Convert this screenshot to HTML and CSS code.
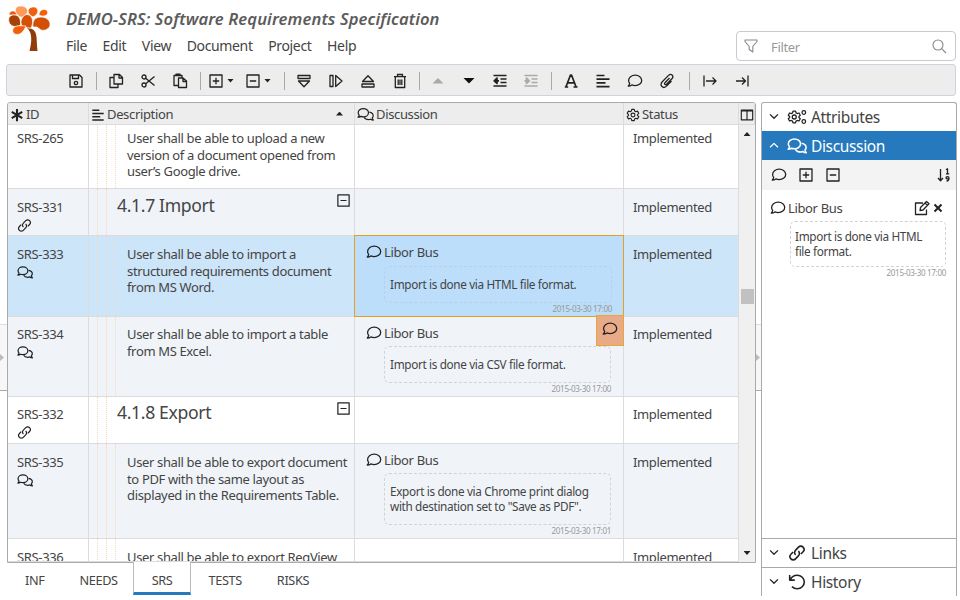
FILE: index.html
```html
<!DOCTYPE html>
<html lang="en">

<head>
    <meta charset="UTF-8">
    <meta name="viewport" content="width=device-width, initial-scale=1.0">
    <title>DEMO-SRS: Software Requirements Specification</title>
    <link rel="stylesheet" href="styles.css">
</head>

<body>
    <svg class="sprite">
        <symbol id="comment" viewBox="0 0 16 16"><path d="M8.2 2.2c3.700 0 6.500 2.300 6.500 5.200s-2.800 5.200-6.500 5.200c-1.200 0-2.300-.2-3.300-.7-1 .8-2.200 1.200-3.700 1.200.8-.8 1.300-1.700 1.500-2.700-.7-.8-1.100-1.900-1.100-3 0-2.900 2.900-5.200 6.600-5.200z"/></symbol>
        <symbol id="comments" viewBox="0 0 18 16"><path d="M6.700 1.700c3 0 5.500 1.900 5.500 4.400s-2.500 4.400-5.500 4.400c-.9 0-1.800-.2-2.500-.5-.8.500-1.900.9-3.200.9.700-.6 1.200-1.400 1.300-2.200-.7-.7-1.100-1.600-1.100-2.600 0-2.500 2.500-4.400 5.500-4.400zM13.200 5.500c2.200.4 4 1.900 4 3.900 0 .9-.4 1.700-1 2.300.2.900.6 1.600 1.200 2.300-1.200 0-2.200-.4-3-1-.7.300-1.400.400-2.200.400-2.100 0-3.900-.9-4.600-2.400"/></symbol>
        <symbol id="link" viewBox="0 0 16 16"><path d="M6.800 9.700c-1.300-1.200-1.300-3 0-4.300l2.500-2.600c1.200-1.200 3-1.200 4.100 0s1.200 2.900 0 4.100l-1.900 2M9.200 6.300c1.300 1.200 1.300 3 0 4.300l-2.500 2.600c-1.200 1.200-3 1.200-4.100 0s-1.200-2.900 0-4.100l1.900-2"/></symbol>
        <symbol id="plus" viewBox="0 0 16 16"><path d="M2 2h12v12H2zM8 4.800v6.400M4.800 8h6.400"/></symbol>
        <symbol id="minus" viewBox="0 0 16 16"><path d="M2 2h12v12H2zM4.800 8h6.400"/></symbol>
        <symbol id="lines" viewBox="0 0 16 16"><path d="M1.500 2.500h8M1.500 6.200h13M1.500 9.900h9M1.500 13.600h13"/></symbol>
        <symbol id="gear" viewBox="0 0 16 16"><path d="M6.600 1.500h2.800l.5 2 1.300.7 2-.6 1.400 2.500-1.500 1.400v1l1.500 1.400-1.400 2.500-2-.6-1.300.7-.5 2H6.600l-.5-2-1.300-.7-2 .6-1.400-2.500 1.500-1.400v-1L1.400 6.100l1.400-2.500 2 .6 1.300-.7z"/><circle cx="8" cy="8" r="2.200"/></symbol>
        <symbol id="down" viewBox="0 0 16 16"><path d="M3.500 5l4.500 4.500L12.500 5"/></symbol>
        <symbol id="up" viewBox="0 0 16 16"><path d="M3.500 9.500L8 5l4.500 4.500"/></symbol>
    </svg>

    <header class="header">
        <svg class="logo" viewBox="0 0 60 60">
            <path fill="#8f3d0b" d="M27 28c6 0 9 3 9.500 9 .4 6 .5 9 1 14H29.500c2-8 3.500-18-2.500-23z"/>
            <g stroke="#fff" stroke-width=".7">
                <path fill="#e8590c" d="M9 15c0-4 4-5 7-3l1 3z"/>
                <path fill="#ff9a5c" d="M21 17.500C17 15 14.500 12 15.500 9s4-3 6-3 5 1 6 4-2 5.500-6.500 7.500z"/>
                <path fill="#f0600c" d="M33 17c-4-2-5.500-5-4.500-7.500s6-3.500 8-1.500 2.500 6-3.500 9z"/>
                <path fill="#f65f08" d="M39 15c0-4 3-6 6-5.500s3.500 4 1.500 5.500-5 1.500-7.500 0z"/>
                <path fill="#a64208" d="M20.500 25c-4 2.500-10 2-11.500-3s2-7.500 6-7 6 4 5.500 10z"/>
                <path fill="#d65006" d="M31 28c-5 0-9.500-1-10-5s3-8.500 6-8.500 5 2.500 5.500 5.500-.5 6-1.500 8z"/>
                <path fill="#d24f05" d="M33 27c-1-6 2-10 8-10s9.500 4 9 8-5 6-9 5l-4-3c-2 0-3 0-4 0z"/>
                <path fill="#f4600a" d="M26 26c-2 5-5 8.500-9 8.500s-5.500-4-3.500-6.500 6-2.500 12.500-2z"/>
            </g>
        </svg>
        <div class="heading">
            <h1>DEMO-SRS: Software Requirements Specification</h1>
            <nav class="menu">
                <span>File</span><span>Edit</span><span>View</span><span>Document</span><span>Project</span><span>Help</span>
            </nav>
        </div>
        <div class="filter">
            <svg class="icon" viewBox="0 0 16 16"><path d="M2 2h12v1.500L9.800 8.500V14L6.200 11.500v-3L2 3.500z"/></svg>
            <span>Filter</span>
            <svg class="icon" viewBox="0 0 16 16"><circle cx="7" cy="7" r="5"/><path d="M10.700 10.700L15 15"/></svg>
        </div>
    </header>

    <div class="toolbar">
        <svg class="icon" viewBox="0 0 16 16"><path d="M2 2h9.500L14 4.500V14H2zM4.500 2v3.500h6V2"/><circle cx="8" cy="10" r="1.700"/></svg>
        <i class="sep"></i>
        <svg class="icon" viewBox="0 0 16 16"><path d="M6 1.500h5.500l3 3V11H6zM11 1.500V5h3.500M6 4.500H2v10h8V11"/></svg>
        <svg class="icon" viewBox="0 0 16 16"><circle cx="4" cy="4" r="2"/><circle cx="4" cy="12" r="2"/><path d="M5.700 5.200L14.500 12.500M5.700 10.800L14.500 3.500"/></svg>
        <svg class="icon" viewBox="0 0 16 16"><path d="M6 12.500H2v-10h8V5M4 2.500V1.200h4v1.300M6.500 5H11l3.500 3v6.500h-8zM11 5v3.500h3.500"/></svg>
        <i class="sep s2"></i>
        <svg class="icon" viewBox="0 0 16 16"><use href="#plus"/></svg><b class="caret"></b>
        <svg class="icon" viewBox="0 0 16 16"><use href="#minus"/></svg><b class="caret"></b>
        <i class="sep s3"></i>
        <svg class="icon" viewBox="0 0 16 16"><path d="M2 2.500h12v3H2zM2.500 8h11L8 13.800z"/></svg>
        <svg class="icon" viewBox="0 0 16 16"><path d="M2 2.500h3v11H2zM7.700 2.500L14 8l-6.300 5.500z"/></svg>
        <svg class="icon" viewBox="0 0 16 16"><path d="M2 11h12v3H2zM2.500 8.500h11L8 2.700z"/></svg>
        <svg class="icon" viewBox="0 0 16 16"><path d="M2 3.700h12M5.500 3.500V1.500h5v2M3.300 4v10.500h9.400V4M6.200 6.500v5.500M8 6.500v5.500M9.800 6.500v5.500"/></svg>
        <i class="sep s4"></i>
        <svg class="icon solid muted" viewBox="0 0 16 16"><path d="M2.500 10.500L8 5l5.500 5.500z"/></svg>
        <svg class="icon solid" viewBox="0 0 16 16"><path d="M2.500 5h11L8 10.500z"/></svg>
        <svg class="icon bold outdent" viewBox="0 0 16 16"><path d="M1.500 2.500h13M8.500 6h6M8.500 9.500h6M1.500 13h13M7 7.800H3M5 5.200L2.200 7.800 5 10.400z"/></svg>
        <svg class="icon bold muted" viewBox="0 0 16 16"><path d="M1.500 2.500h13M8.500 6h6M8.500 9.500h6M1.500 13h13M1.500 7.800H5M3.500 5.200l2.800 2.600-2.800 2.600z"/></svg>
        <i class="sep s5"></i>
        <svg class="icon bold" viewBox="0 0 16 16"><path d="M3 13.800L7.500 2h1L13 13.800M1.800 14h3.400M10.500 14h4M4.800 9.800h6.500"/></svg>
        <svg class="icon bold" viewBox="0 0 16 16"><use href="#lines"/></svg>
        <svg class="icon" viewBox="0 0 16 16"><use href="#comment"/></svg>
        <svg class="icon" viewBox="0 0 16 16"><path d="M10.500 5L6 9.700c-1.200 1.300.4 2.700 1.600 1.500l5.300-5.500c2.500-2.800-.9-5.800-3.400-3.300L3.300 8.700c-3.500 3.800 1 7.800 4.500 4.200L12.500 8"/></svg>
        <i class="sep s6"></i>
        <svg class="icon" viewBox="0 0 16 16"><path d="M2 2.500v11M4 8h10M10.500 4.500L14 8l-3.500 3.500"/></svg>
        <svg class="icon" viewBox="0 0 16 16"><path d="M14 2.500v11M2 8h9.500M8 4.500L11.500 8 8 11.500"/></svg>
    </div>

    <main class="main">
        <div class="splitter"></div>

        <section class="left">
            <div class="table">
                <div class="row thead">
                    <div><svg class="icon star" viewBox="0 0 16 16"><path d="M8 1v14M2 4.500l12 7M14 4.500l-12 7"/></svg>ID</div>
                    <div><svg class="icon bold" viewBox="0 0 16 16"><use href="#lines"/></svg>Description<b class="caret asc"></b></div>
                    <div><svg class="icon wide" viewBox="0 0 18 16"><use href="#comments"/></svg>Discussion</div>
                    <div><svg class="icon" viewBox="0 0 16 16"><use href="#gear"/></svg>Status</div>
                    <div class="columns"><svg class="icon" viewBox="0 0 16 16"><path d="M1.500 2.500h13v11h-13zM8 2.500v11M1.500 3.300h13"/></svg></div>
                </div>
                <div class="body">
                    <div class="rows">
                        <div class="row first">
                            <div class="id">SRS-265</div>
                            <div class="desc"><i></i><i></i><i></i><p>User shall be able to upload a new<br>version of a document opened from<br>user’s Google drive.</p></div>
                            <div></div>
                            <div class="status">Implemented</div>
                        </div>
                        <div class="row odd">
                            <div class="id">SRS-331<svg class="icon" viewBox="0 0 16 16"><use href="#link"/></svg></div>
                            <div class="desc"><i></i><i></i><h2>4.1.7 Import</h2><svg class="icon fold" viewBox="0 0 16 16"><use href="#minus"/></svg></div>
                            <div></div>
                            <div class="status">Implemented</div>
                        </div>
                        <div class="row selected">
                            <div class="id">SRS-333<svg class="icon wide" viewBox="0 0 18 16"><use href="#comments"/></svg></div>
                            <div class="desc"><i></i><i></i><i></i><p>User shall be able to import a<br>structured requirements document<br>from MS Word.</p></div>
                            <div class="talk active">
                                <div class="author"><svg class="icon" viewBox="0 0 16 16"><use href="#comment"/></svg>Libor Bus</div>
                                <div class="note">Import is done via HTML file format.</div>
                                <div class="date">2015-03-30 17:00</div>
                                <div class="add"><svg class="icon" viewBox="0 0 16 16"><use href="#comment"/></svg></div>
                            </div>
                            <div class="status">Implemented</div>
                        </div>
                        <div class="row odd tight">
                            <div class="id">SRS-334<svg class="icon wide" viewBox="0 0 18 16"><use href="#comments"/></svg></div>
                            <div class="desc"><i></i><i></i><i></i><p>User shall be able to import a table<br>from MS Excel.</p></div>
                            <div class="talk">
                                <div class="author"><svg class="icon" viewBox="0 0 16 16"><use href="#comment"/></svg>Libor Bus</div>
                                <div class="note">Import is done via CSV file format.</div>
                                <div class="date">2015-03-30 17:00</div>
                            </div>
                            <div class="status">Implemented</div>
                        </div>
                        <div class="row tight">
                            <div class="id">SRS-332<svg class="icon" viewBox="0 0 16 16"><use href="#link"/></svg></div>
                            <div class="desc"><i></i><i></i><h2>4.1.8 Export</h2><svg class="icon fold" viewBox="0 0 16 16"><use href="#minus"/></svg></div>
                            <div></div>
                            <div class="status">Implemented</div>
                        </div>
                        <div class="row odd">
                            <div class="id">SRS-335<svg class="icon wide" viewBox="0 0 18 16"><use href="#comments"/></svg></div>
                            <div class="desc"><i></i><i></i><i></i><p>User shall be able to export document<br>to PDF with the same layout as<br>displayed in the Requirements Table.</p></div>
                            <div class="talk">
                                <div class="author"><svg class="icon" viewBox="0 0 16 16"><use href="#comment"/></svg>Libor Bus</div>
                                <div class="note">Export is done via Chrome print dialog<br>with destination set to "Save as PDF".</div>
                                <div class="date">2015-03-30 17:01</div>
                            </div>
                            <div class="status">Implemented</div>
                        </div>
                        <div class="row last">
                            <div class="id">SRS-336</div>
                            <div class="desc"><i></i><i></i><i></i><p>User shall be able to export ReqView</p></div>
                            <div></div>
                            <div class="status">Implemented</div>
                        </div>
                    </div>
                    <div class="scrollbar"><b class="caret asc"></b><span class="thumb"></span><b class="caret"></b></div>
                </div>
            </div>
            <nav class="tabs">
                <span>INF</span><span>NEEDS</span><span class="current">SRS</span><span>TESTS</span><span>RISKS</span>
            </nav>
        </section>

        <div class="splitter right"></div>

        <aside class="panel">
            <div class="section"><svg class="icon arrow" viewBox="0 0 16 16"><use href="#down"/></svg><svg class="icon big" viewBox="0 0 22 18"><svg x="0" y="1" width="16" height="16" viewBox="0 0 16 16"><use href="#gear"/></svg><circle cx="18.500" cy="4" r="2"/><circle cx="18.500" cy="14" r="2"/></svg>Attributes</div>
            <div class="section open"><svg class="icon arrow" viewBox="0 0 16 16"><use href="#up"/></svg><svg class="icon big" viewBox="0 0 18 16"><use href="#comments"/></svg>Discussion</div>
            <div class="tools">
                <svg class="icon" viewBox="0 0 16 16"><use href="#comment"/></svg>
                <svg class="icon" viewBox="0 0 16 16"><use href="#plus"/></svg>
                <svg class="icon" viewBox="0 0 16 16"><use href="#minus"/></svg>
                <svg class="icon sort" viewBox="0 0 14 16"><path d="M3.500 2v11.500M1 11l2.500 2.800L6 11M9 2.800l1.500-1v5M9 6.800h3.200M12 11.500c-1 .8-3 .5-3-.8s3-1.500 3 .2c0 2-1 3-2.500 3.300"/></svg>
            </div>
            <div class="comment">
                <div class="author">
                    <svg class="icon" viewBox="0 0 16 16"><use href="#comment"/></svg>Libor Bus
                    <svg class="icon edit" viewBox="0 0 16 16"><path d="M9 3H1.500v11.500H12.500V9.500M6 10.500l.5-3L12.500 1.500l2.500 2.300L9 10zM11 3l2.500 2.400"/></svg>
                    <svg class="icon close" viewBox="0 0 16 16"><path d="M4.500 4.500l7 7M11.500 4.500l-7 7"/></svg>
                </div>
                <div class="note">Import is done via HTML<br>file format.</div>
                <div class="date">2015-03-30 17:00</div>
            </div>
            <div class="section line"><svg class="icon arrow" viewBox="0 0 16 16"><use href="#down"/></svg><svg class="icon big" viewBox="0 0 16 16"><use href="#link"/></svg>Links</div>
            <div class="section line"><svg class="icon arrow" viewBox="0 0 16 16"><use href="#down"/></svg><svg class="icon big" viewBox="0 0 16 16"><path d="M1.500 1.800v4.500H6M2 6C3.200 3.500 5.500 2 8.200 2c3.500 0 6.300 2.700 6.300 6s-2.800 6-6.300 6c-1.900 0-3.500-.7-4.700-1.900"/></svg>History</div>
        </aside>
    </main>
</body>

</html>
```

FILE: styles.css
```css
* {
    box-sizing: border-box;
}

body {
    margin: 0;
    height: 600px;
    overflow: hidden;
    background: #fff;
    color: #444;
    font-family: "Segoe UI", "Noto Sans", sans-serif;
    font-size: 13px;
    letter-spacing: -0.027em;
    white-space: nowrap;
}

h1,
h2,
p {
    margin: 0;
    font-weight: normal;
}

.sprite {
    display: none;
}

.icon {
    flex: none;
    width: 16px;
    height: 16px;
    fill: none;
    stroke: #222;
    stroke-width: 1.3;
    stroke-linejoin: round;
}

.icon.bold {
    stroke-width: 1.7;
}

.icon.star {
    stroke-width: 2.4;
}

.icon.solid {
    fill: #111;
    stroke: none;
}

.icon.muted {
    stroke: #aaa;
}

.icon.solid.muted {
    fill: #aaa;
    stroke: none;
}

.caret {
    flex: none;
    width: 7px;
    height: 4px;
    background: #222;
    clip-path: polygon(0 0, 100% 0, 50% 100%);
}

.caret.asc {
    clip-path: polygon(50% 0, 100% 100%, 0 100%);
}

/* Header */
.header {
    display: flex;
    height: 64px;
    padding-right: 4px;
}

.logo {
    width: 60px;
    height: 60px;
}

.heading {
    flex: 1;
    padding: 6px 0 0 6px;
}

.heading h1 {
    height: 26px;
    line-height: 26px;
    font-size: 16.6px;
    font-style: italic;
    font-weight: 600;
    letter-spacing: 0.1px;
    color: #5c5c5c;
}

.menu {
    display: flex;
    gap: 15.6px;
    line-height: 28px;
    font-size: 14px;
}

.filter {
    display: flex;
    align-items: center;
    width: 220px;
    height: 30px;
    margin-top: 31px;
    padding: 0 8px 0 6px;
    border: 1px solid #c9c9d4;
    border-radius: 4px;
    color: #999;
}

.filter span {
    flex: 1;
    padding: 2px 0 0 12px;
}

.filter .icon {
    stroke: #888;
    stroke-width: 1.1;
}

/* Toolbar */
.toolbar {
    display: flex;
    align-items: center;
    gap: 16px;
    height: 32px;
    margin: 0 4px 0 6px;
    padding: 1px 0 0 61px;
    background: #ededed;
    border: 1px solid #d2d2de;
    border-radius: 3px;
}

.toolbar .caret {
    margin: 0 -5px 0 -13px;
}

.toolbar .solid,
.toolbar .outdent {
    margin-right: -1px;
}

.sep {
    width: 1px;
    height: 18px;
    margin: 0 -5px 0 -4px;
    background: #aaa;
}

.sep.s2 {
    margin-right: -9px;
}

.sep.s3 {
    margin-left: 2px;
}

.sep.s4 {
    margin: 0 -6px 0 -5px;
}

.sep.s6 {
    margin: 0 -4px 0 -2px;
}

/* Main area */
.main {
    display: grid;
    grid-template-columns: 7px 749px 5px 196px;
    height: 494px;
    margin-top: 6px;
}

.splitter {
    display: flex;
    align-items: center;
    height: 67px;
    margin-top: 222px;
    background: #f7f7f7;
    border-top: 1px solid #ddd;
    border-bottom: 1px solid #aaa;
}

.splitter::after {
    content: "";
    width: 4px;
    height: 7px;
    background: #bbb;
    clip-path: polygon(0 0, 100% 50%, 0 100%);
}

.table {
    height: 461px;
    border: 1px solid #aaa;
    border-radius: 3px 3px 0 0;
    overflow: hidden;
}

.row {
    display: grid;
    grid-template-columns: 81px 266px 269px 1fr;
    min-height: 0;
    line-height: 16.5px;
    border-bottom: 1px solid #dcdcdc;
}

.row > div {
    border-right: 1px solid #dcdcdc;
}

.thead {
    grid-template-columns: 81px 266px 269px 115px 1fr;
    height: 22px;
    background: #ededed;
}

.thead > div {
    display: flex;
    align-items: center;
    gap: 2px;
    padding: 2px 0 0 2px;
}

.thead .icon {
    width: 14px;
    height: 14px;
}

.thead .icon.wide {
    width: 17px;
    height: 15px;
}

.thead .asc {
    margin: -2px 11px 0 auto;
}

.thead .columns {
    padding-left: 1px;
}

.body {
    display: grid;
    grid-template-columns: 731px 16px;
    height: 437px;
}

.rows {
    display: grid;
    grid-template-rows: 64px 47px 81px 80px 47px 95px 23px;
}

.row.odd {
    background: #f0f4f9;
}

.row.selected {
    background: #cde5f9;
}

.id {
    display: flex;
    flex-direction: column;
    padding: 10px 0 0 9px;
    gap: 2px;
}

.id .icon {
    width: 15px;
    height: 15px;
}

.id .icon.wide {
    width: 16px;
    height: 15px;
    stroke-width: 1.4;
}

.desc {
    display: flex;
    padding-right: 3px;
}

.desc i {
    width: 9px;
    border-right: 1px dotted #f2d9c4;
}

.desc p {
    padding: 10px 0 0 11px;
}

.desc h2 {
    padding: 8px 0 0 10px;
    font-size: 17.6px;
}

.fold {
    width: 15px;
    height: 15px;
    margin: 4px 0 0 auto;
}

.status {
    padding: 10px 0 0 9px;
}

.tight .id,
.tight .desc p,
.tight .status {
    padding-top: 9px;
}

.tight .desc h2 {
    padding-top: 7px;
}

.first p,
.first .id,
.first .status {
    padding-top: 5px;
}

.last {
    overflow: hidden;
}

.author {
    display: flex;
    align-items: center;
    gap: 2px;
}

.note {
    padding: 10px 5px;
    border: 1px dashed #d3d3d3;
    border-radius: 5px;
    font-size: 11.75px;
    line-height: 15px;
}

.date {
    color: #999;
    font-size: 8.1px;
    line-height: 10px;
    text-align: right;
}

.talk {
    position: relative;
    padding: 8px 12px 0 11px;
}

.talk .note {
    margin: 4px 0 1px 18px;
}

.talk.active {
    margin: -1px 0 -1px -1px;
    padding: 8px 11px 0;
    background: #bcdefa;
    border: 1px solid #e6a020;
}

.talk.active .note {
    margin-top: 5px;
    border-color: #b5d3e8;
}

.add {
    position: absolute;
    right: -1px;
    bottom: -30px;
    z-index: 1;
    width: 28px;
    height: 31px;
    padding: 5px;
    background: #e9ab87;
    border: 1px solid #e6a63b;
}

.scrollbar {
    display: flex;
    flex-direction: column;
    align-items: center;
    background: #f0f0f0;
    padding: 7px 0;
}

.thumb {
    width: 13px;
    height: 15px;
    margin: 153px 0 auto;
    background: #c1c1c1;
}

.tabs {
    display: flex;
    height: 32px;
}

.tabs span {
    padding: 8px 17px 0 18px;
    font-size: 12.7px;
}

.tabs .current {
    margin: -1px 0 0 -2px;
    padding-top: 9px;
    background: #fff;
    border: 1px solid #bbb;
    border-top: 0;
    border-bottom: 3px solid #2679bd;
}

/* Side panel */
.panel {
    display: flex;
    flex-direction: column;
    border: 1px solid #aaa;
    border-bottom: 0;
    border-radius: 3px 3px 0 0;
}

.section {
    display: flex;
    align-items: center;
    height: 28px;
    padding-left: 5px;
    font-size: 15.5px;
}

.section .arrow {
    width: 14px;
    margin-right: 6px;
    stroke-width: 1.5;
}

.section .big {
    width: 20px;
    height: 18px;
    margin-right: 4px;
    stroke-width: 1.4;
}

.section.open {
    height: 29px;
    background: #2679bd;
    color: #fff;
}

.section.open .icon {
    stroke: #fff;
}

.section.line {
    height: 29px;
    border-top: 1px solid #aaa;
}

.tools {
    display: flex;
    align-items: center;
    gap: 11px;
    height: 30px;
    padding: 0 4px 0 9px;
    background: #f3f3f3;
}

.tools .sort {
    margin-left: auto;
}

.comment {
    flex: 1;
    padding: 9px 10px 0 8px;
}

.comment .edit {
    margin-left: auto;
}

.comment .close {
    stroke-width: 2;
    margin-left: -2px;
}

.comment .note {
    margin: 4px 0 1px 20px;
    padding: 7px 4px;
}
```
